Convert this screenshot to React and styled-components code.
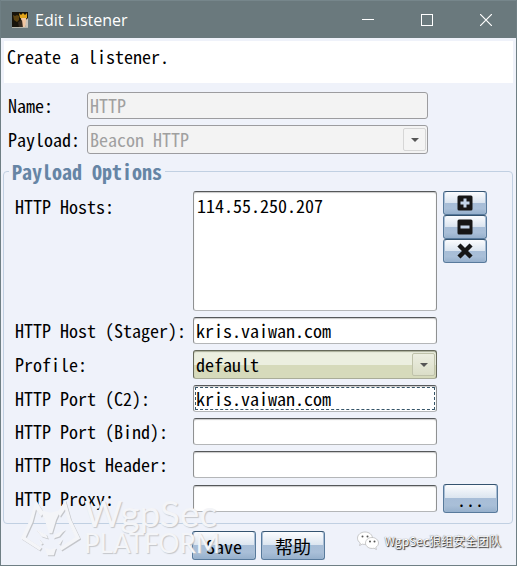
import React from "react";
import styled, { createGlobalStyle, css } from "styled-components";

const Global = createGlobalStyle`
  * { box-sizing: border-box; }
  body { margin: 0; }
  body, input, select, textarea, button {
    font-family: "Noto Sans Mono CJK SC", "Liberation Mono", "Noto Sans CJK SC", monospace;
    font-size: 18px;
    line-height: 24px;
    color: #000;
  }
`;

const Window = styled.main`
  position: relative;
  min-height: 100vh;
  background: #eff2fa;
  border: 1px solid #6f7f84;
  border-top: 0;
`;

const TitleBar = styled.header`
  display: flex;
  align-items: center;
  height: 38px;
  padding: 0 1px 0 11px;
  background: #6a797d;
  border-top: 1px solid #76868b;
`;

const Title = styled.h1`
  flex: 1;
  margin: 0 0 0 7px;
  color: #fff;
  font: 400 16px/24px "Open Sans", "Noto Sans", sans-serif;
`;

const WindowButton = styled.button`
  display: grid;
  place-items: center;
  width: 59px;
  height: 36px;
  padding: 0;
  border: 0;
  background: none;
`;

const Description = styled.p`
  margin: 3px;
  height: 42px;
  padding: 3px;
  background: #fff;
`;

const Summary = styled.section`
  display: grid;
  grid-template-columns: 73px minmax(0, 1fr);
  gap: 6px;
  align-items: center;
  padding: 6px 88px 0 7px;
`;

const Label = styled.label`
  white-space: nowrap;
  align-self: ${(p) => (p.$top ? "start" : "center")};
  padding: ${(p) => (p.$top ? "3px 0 0" : "0 0 2px")};
`;

const fieldFrame = css`
  display: block;
  width: 100%;
  border: 1px solid #8f9192;
  border-top-color: #55585a;
  border-bottom-color: #b4b6b8;
  border-radius: 3px;
  background: #fff;
  box-shadow: inset 0 1px 1px #c9c9c9;
  outline: 0;
  &:disabled {
    color: #a0a0a0;
    -webkit-text-fill-color: #a0a0a0;
    background: #f3f3f3;
    border-color: #9c9c9f;
    box-shadow: none;
    opacity: 1;
  }
`;

const TextField = styled.input`
  ${fieldFrame}
  height: 27px;
  padding: 0 2px 2px;
  ${(p) =>
    p.$active &&
    css`
      outline: 1px dashed #355468;
      outline-offset: -3px;
    `}
`;

const HostList = styled.textarea`
  ${fieldFrame}
  height: 120px;
  padding: 1px 3px;
  resize: none;
`;

const SelectBox = styled.div`
  display: grid;
  grid-template-columns: minmax(0, 1fr) 25px;
  > * { grid-row: 1; }
`;

const Select = styled.select`
  ${fieldFrame}
  grid-column: 1 / 3;
  appearance: none;
  height: 29px;
  padding: 0 2px 2px;
  &:enabled {
    background: linear-gradient(#ecefe0 0 50%, #d6dabb 50%);
    border-color: #66695a;
    border-bottom-color: #a9ac98;
    box-shadow: inset 0 1px 1px #a9ac98;
  }
`;

const SelectArrow = styled.span`
  grid-column: 2;
  display: grid;
  place-items: center;
  width: 23px;
  height: 23px;
  margin-top: 3px;
  border: 1px solid ${(p) => (p.$off ? "#d6d6d6" : "#bfc2aa")};
  border-radius: 2px;
  background: ${(p) => (p.$off ? "#f4f4f4" : "linear-gradient(#eceee1, #dbdec8)")};
  pointer-events: none;
`;

const Options = styled.fieldset`
  min-width: 0;
  margin: 6px 3px 0 2px;
  padding: 8px 14px 10px 11px;
  border: 1px solid #c1d0e2;
  border-radius: 4px;
`;

const Legend = styled.legend`
  margin-left: -6px;
  padding: 0 3px;
  color: #6685a5;
  font-size: 20px;
  font-weight: 700;
  line-height: 23px;
`;

const OptionGrid = styled.div`
  display: grid;
  grid-template-columns: 172px minmax(0, 1fr) 55px;
  gap: 6px;
  align-items: center;
`;

const Spacer = styled.span``;

const Button = styled.button`
  display: grid;
  place-items: center;
  width: ${(p) => p.$width}px;
  height: ${(p) => (p.$small ? 24 : 29)}px;
  padding: 0;
  border: 1px solid #587a9c;
  border-top-color: #34536f;
  border-radius: 3px;
  background: linear-gradient(#fbfcfe, #dae4ef 50%, #a7bdd7 50%, #a9bfd8 75%, #96b0cc);
  box-shadow: inset 1px 0 #a9bed5, inset -1px 0 #a9bed5;
`;

const IconStack = styled.div`
  align-self: start;
`;

const Actions = styled.footer`
  display: flex;
  justify-content: center;
  gap: 5px;
  padding-top: 7px;
`;

const PlatformMark = styled.div`
  position: absolute;
  left: 19px;
  bottom: 7px;
  display: flex;
  align-items: center;
  gap: 3px;
  pointer-events: none;
`;

const PlatformText = styled.div`
  color: #f4f5f8;
  font: 400 26px/30px Lato, sans-serif;
  text-shadow: 1px 1px 1px #c4c6ca;
`;

const PlatformName = styled.div`
  font-size: 37px;
`;

const TeamMark = styled.div`
  position: absolute;
  right: 15px;
  bottom: 12px;
  display: flex;
  align-items: center;
  gap: 6px;
  color: #fff;
  font: 400 12px/24px "Noto Sans CJK SC", sans-serif;
  text-shadow: 1px 1px 1px #222, 0 0 1px #555;
  pointer-events: none;
`;

const Caret = () => (
  <svg width="8" height="4" viewBox="0 0 8 4">
    <path d="M0 0H8L4 4Z" fill="#555" />
  </svg>
);

const AppIcon = () => (
  <svg width="16" height="16" viewBox="0 0 16 16">
    <rect width="16" height="16" fill="#17130a" />
    <path d="M1 3L3 4L5 3L7 4V8L5 10L2 8Z" fill="#5d4310" />
    <path d="M7 1L9 3L11 1L13 3L15 1V6L12 7L8 6Z" fill="#e2a51b" />
    <path d="M9 6H14L15 10L13 16H10Z" fill="#f0c5a0" />
    <path d="M14 8L16 6V16H13Z" fill="#c9c3b9" />
    <path d="M6 10L10 8L11 16H7Z" fill="#35291d" />
    <path d="M0 15.500H16" stroke="#b5b5ab" />
  </svg>
);

const Glyph = ({ kind }) => (
  <svg width="16" height="16" viewBox="0 0 16 16">
    {kind === "remove" ? (
      <path d="M3.5 3.5L12.5 12.5M12.5 3.5L3.5 12.5" stroke="#161616" strokeWidth="4.4" strokeLinecap="square" />
    ) : (
      <>
        <rect x="0.5" y="0.5" width="15" height="15" rx="1.5" fill="#161616" />
        <path d={kind === "add" ? "M3.500 8H12.500M8 3.500V12.500" : "M3.500 8H12.500"} stroke="#c4d5e9" strokeWidth="3" />
      </>
    )}
  </svg>
);

const wolfShapes = [
  "M60 13L43 72L15 130L72 166L78 158L30 126L51 80L61 42L76 64L84 50Z",
  "M150 13L167 72L195 130L138 166L132 158L180 126L159 80L149 42L134 64L126 50Z",
  "M74 44L105 52L136 44L122 74L110 114H100L88 74Z",
  "M60 102L92 118L97 130L78 124Z",
  "M150 102L118 118L113 130L132 124Z",
  "M88 158L105 164L122 158L115 181H95Z",
  "M69 130L82 145L76 149Z",
  "M141 130L128 145L134 149Z",
];

const Wolf = () => (
  <svg width="61" height="58" viewBox="13 10 184 176">
    <g fill="#c4c6ca" transform="translate(3 3)">
      {wolfShapes.map((d) => <path key={d} d={d} />)}
    </g>
    <g fill="#f4f5f8">
      {wolfShapes.map((d) => <path key={d} d={d} />)}
    </g>
  </svg>
);

const WeChat = () => (
  <svg width="22" height="20" viewBox="0 0 22 20">
    <g fill="#fff" stroke="#aaa" strokeWidth="0.6">
      <path d="M8 1C3.800 1 .5 3.800 .5 7.200C.5 9.200 1.600 10.900 3.300 12L2.600 14.500L5.400 13.100C9 14.300 15.500 12 15.500 7.200C15.500 3.800 12.200 1 8 1Z" />
      <path d="M15 6.500C11.300 6.500 8.500 9 8.500 12C8.500 15.800 13 18.300 17 17.200L19.400 18.500L18.800 16.300C20.500 15.300 21.500 13.700 21.500 12C21.500 9 18.600 6.500 15 6.500Z" />
    </g>
    <g fill="#555">
      <circle cx="5.500" cy="5.500" r="1" /><circle cx="10.500" cy="5.500" r="1" />
      <circle cx="13" cy="10.500" r="1" /><circle cx="17.500" cy="10.500" r="1" />
    </g>
  </svg>
);

const SelectField = ({ id, value, disabled }) => (
  <SelectBox>
    <Select id={id} disabled={disabled} defaultValue={value}>
      <option>{value}</option>
    </Select>
    <SelectArrow $off={disabled}><Caret /></SelectArrow>
  </SelectBox>
);

const TextOption = ({ id, label, value = "", active, children }) => (
  <>
    <Label htmlFor={id}>{label}</Label>
    <TextField id={id} defaultValue={value} $active={active} />
    {children || <Spacer />}
  </>
);

export default function App() {
  return (
    <>
      <Global />
      <Window>
        <TitleBar>
          <AppIcon />
          <Title>Edit Listener</Title>
          <WindowButton aria-label="Minimize">
            <svg width="12" height="12"><path d="M0 5.5H12" stroke="#fff" /></svg>
          </WindowButton>
          <WindowButton aria-label="Maximize">
            <svg width="12" height="12"><rect x="0.5" y="0.5" width="11" height="11" fill="none" stroke="#fff" /></svg>
          </WindowButton>
          <WindowButton aria-label="Close">
            <svg width="12" height="12"><path d="M0 0L12 12M12 0L0 12" stroke="#fff" strokeWidth="1.2" /></svg>
          </WindowButton>
        </TitleBar>
        <Description>Create a listener.</Description>
        <Summary>
          <Label htmlFor="name">Name:</Label>
          <TextField id="name" defaultValue="HTTP" disabled />
          <Label htmlFor="payload">Payload:</Label>
          <SelectField id="payload" value="Beacon HTTP" disabled />
        </Summary>
        <Options>
          <Legend>Payload Options</Legend>
          <OptionGrid>
            <Label htmlFor="hosts" $top>HTTP Hosts:</Label>
            <HostList id="hosts" defaultValue="114.55.250.207" />
            <IconStack>
              <Button $width={44} $small aria-label="Add host"><Glyph kind="add" /></Button>
              <Button $width={44} $small aria-label="Edit host"><Glyph kind="edit" /></Button>
              <Button $width={44} $small aria-label="Remove host"><Glyph kind="remove" /></Button>
            </IconStack>
            <TextOption id="stager" label="HTTP Host (Stager):" value="kris.vaiwan.com" />
            <Label htmlFor="profile">Profile:</Label>
            <SelectField id="profile" value="default" />
            <Spacer />
            <TextOption id="c2" label="HTTP Port (C2):" value="kris.vaiwan.com" active />
            <TextOption id="bind" label="HTTP Port (Bind):" />
            <TextOption id="header" label="HTTP Host Header:" />
            <TextOption id="proxy" label="HTTP Proxy:">
              <Button $width={55}>...</Button>
            </TextOption>
          </OptionGrid>
        </Options>
        <Actions>
          <Button $width={64}>Save</Button>
          <Button $width={64}>帮助</Button>
        </Actions>
        <PlatformMark>
          <Wolf />
          <PlatformText>
            <PlatformName>WgpSec</PlatformName>
            <div>PLATFORM</div>
          </PlatformText>
        </PlatformMark>
        <TeamMark><WeChat />WgpSec狼组安全团队</TeamMark>
      </Window>
    </>
  );
}
